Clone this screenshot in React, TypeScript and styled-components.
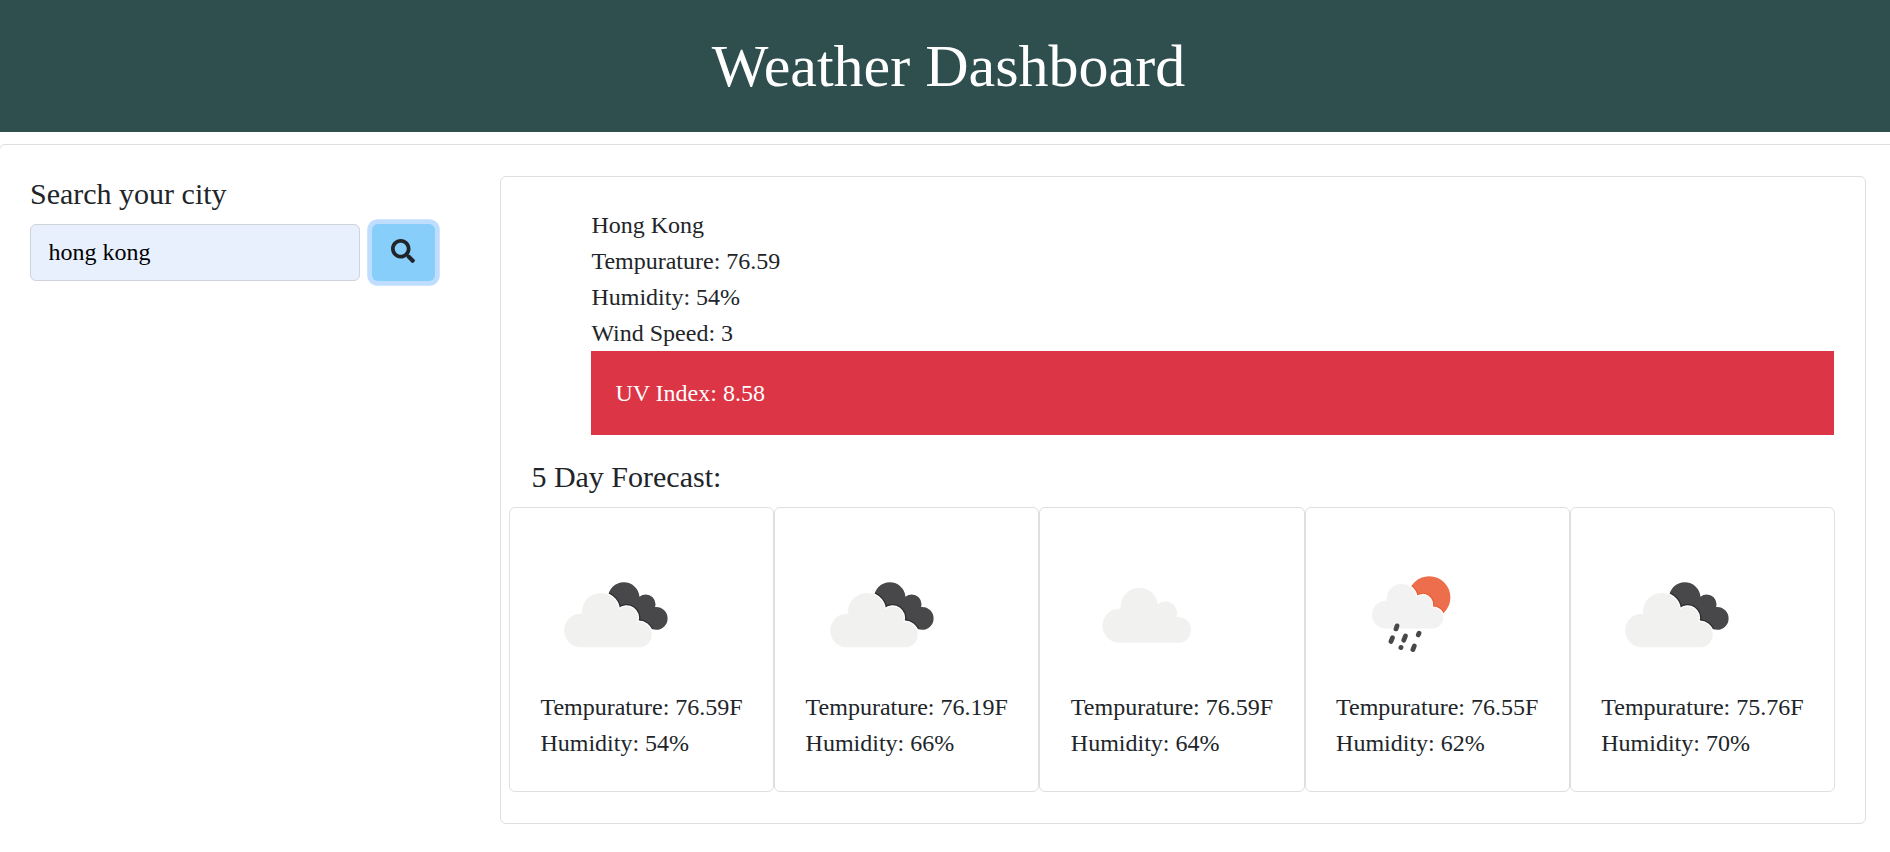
import React from "react";
import styled, { createGlobalStyle } from "styled-components";
import { FaSearch } from "react-icons/fa";

const GlobalStyle = createGlobalStyle`
  *, *::before, *::after { box-sizing: border-box; }
  body {
    margin: 0;
    background: #fff;
    color: #212529;
    font-family: "Liberation Serif", "Times New Roman", serif;
    font-size: 24px;
    line-height: 1.5;
    overflow: hidden;
  }
`;

const Header = styled.header`
  padding: 30px;
  margin-bottom: 12px;
  background: #2f4f4f;
  color: #fff;
  text-align: center;
`;

const Title = styled.h1`
  margin: 0;
  padding-left: 7px;
  font-size: 60px;
  font-weight: 500;
  line-height: 1.2;
`;

const Card = styled.div`
  border: 1px solid #dfdfdf;
  border-radius: 6px;
  background: #fff;
  padding: 30.5px;
`;

const PageCard = styled(Card)`
  display: flex;
  align-items: flex-start;
  margin: 0 -23px 0 -1.5px;
  padding-bottom: 36px;
`;

const SearchPanel = styled.section`
  flex: 0 0 469.5px;
`;

const Heading = styled.h5`
  margin: 0 0 12px;
  font-size: 30px;
  font-weight: 500;
  line-height: 1.2;
`;

const SearchForm = styled.form`
  display: flex;
  gap: 12px;
`;

const CityInput = styled.input`
  width: 330px;
  height: 57px;
  padding: 9px 18px 9px 17.5px;
  border: 1px solid #ced4da;
  border-radius: 6px;
  background: #e8f0fe;
  color: #000;
  font: inherit;
  outline: none;
`;

const SearchButton = styled.button`
  width: 63px;
  height: 57px;
  padding: 0 1px 3px 0;
  display: flex;
  align-items: center;
  justify-content: center;
  border: 0;
  border-radius: 6px;
  background: #87cefa;
  color: #212529;
  font-size: 24px;
  box-shadow: 0 0 0 4.8px #bfdeff;
`;

const Results = styled(Card)`
  flex: 0 0 1366px;
  min-width: 0;
  padding-left: 30.9px;
  padding-right: 30px;
`;

const Conditions = styled.ul`
  list-style: none;
  margin: 0 0.8px 24px 0;
  padding: 0 0 0 60px;
`;

const UvIndex = styled.li`
  padding: 24px;
  background: #dc3545;
  color: #fff;
`;

const Forecast = styled.div`
  display: flex;
  margin: 0 -0.5px 0 -22.5px;
`;

const DayCard = styled(Card)`
  flex: 1 1 0;
  min-width: 0;
  white-space: nowrap;
`;

const WeatherIcon = styled.svg`
  display: block;
  width: 150px;
  height: 150px;
`;

const CLOUD =
  "M39.8 108.3A16.6 16.6 0 1 1 42.2 74.7A18.4 18.4 0 1 1 78.9 70.4A11.4 11.4 0 0 1 97.2 82.9A12.8 12.8 0 1 1 100.6 108.3Z";

type Sky = "broken" | "cloudy" | "rain";

function Icon({ sky }: { sky: Sky }) {
  if (sky === "cloudy") {
    return (
      <WeatherIcon viewBox="0 0 150 150">
        <path d={CLOUD} transform="matrix(1.012 0 0 1.015 7 -6.1)" fill="#f1f1f0" />
      </WeatherIcon>
    );
  }
  if (sky === "rain") {
    return (
      <WeatherIcon viewBox="0 0 150 150">
        <circle cx="93.2" cy="58.4" r="21.2" fill="#ec6e4c" />
        <g transform="matrix(.815 0 0 .82 16.3 .6)">
          <path d={CLOUD} fill="none" stroke="#e9572f" strokeWidth="5" clipPath="url(#sunArea)" />
          <path d={CLOUD} fill="#f2f2f2" stroke="#fff" strokeWidth="2.6" />
          <path d={CLOUD} fill="#f2f2f2" />
        </g>
        <clipPath id="sunArea">
          <circle cx="94.4" cy="70.5" r="25.6" />
        </clipPath>
        <g stroke="#48484a" strokeWidth="4.8" strokeLinecap="round">
          <path d="M61 86.9L60 89.9M56.4 98.8L55 102.4M69.4 97.1L67.8 101.2M83 94.3L82.3 95.9M65 108.4L64.9 108.6M78.3 107L76.9 110.6" />
        </g>
      </WeatherIcon>
    );
  }
  return (
    <WeatherIcon viewBox="0 0 150 150">
      <clipPath id="darkCloud">
        <circle cx="83.8" cy="58.9" r="15.7" />
        <circle cx="105.8" cy="65.1" r="9.7" />
        <circle cx="116.2" cy="79.4" r="11.4" />
        <path d="M80 60L98 58L112 70L116 90L98 90Z" />
      </clipPath>
      <g clipPath="url(#darkCloud)">
        <rect x="60" y="40" width="80" height="60" fill="#48484a" />
        <path d={CLOUD} fill="none" stroke="#2e2e30" strokeWidth="5" />
      </g>
      <path d={CLOUD} fill="#f1f1f0" stroke="#fff" strokeWidth="2.4" />
      <path d={CLOUD} fill="#f1f1f0" />
    </WeatherIcon>
  );
}

const days: { sky: Sky; temp: string; humidity: number }[] = [
  { sky: "broken", temp: "76.59", humidity: 54 },
  { sky: "broken", temp: "76.19", humidity: 66 },
  { sky: "cloudy", temp: "76.59", humidity: 64 },
  { sky: "rain", temp: "76.55", humidity: 62 },
  { sky: "broken", temp: "75.76", humidity: 70 },
];

export default function App() {
  return (
    <>
      <GlobalStyle />
      <Header>
        <Title>Weather Dashboard</Title>
      </Header>
      <PageCard>
        <SearchPanel>
          <Heading>Search your city</Heading>
          <SearchForm onSubmit={(e) => e.preventDefault()}>
            <CityInput type="text" defaultValue="hong kong" aria-label="City" />
            <SearchButton type="submit" aria-label="Search">
              <FaSearch />
            </SearchButton>
          </SearchForm>
        </SearchPanel>
        <Results>
          <Conditions>
            <li>Hong Kong</li>
            <li>Tempurature: 76.59</li>
            <li>Humidity: 54%</li>
            <li>Wind Speed: 3</li>
            <UvIndex>UV Index: 8.58</UvIndex>
          </Conditions>
          <Heading>5 Day Forecast:</Heading>
          <Forecast>
            {days.map((day, i) => (
              <DayCard key={i}>
                <Icon sky={day.sky} />
                <div>Tempurature: {day.temp}F</div>
                <div>Humidity: {day.humidity}%</div>
              </DayCard>
            ))}
          </Forecast>
        </Results>
      </PageCard>
    </>
  );
}
